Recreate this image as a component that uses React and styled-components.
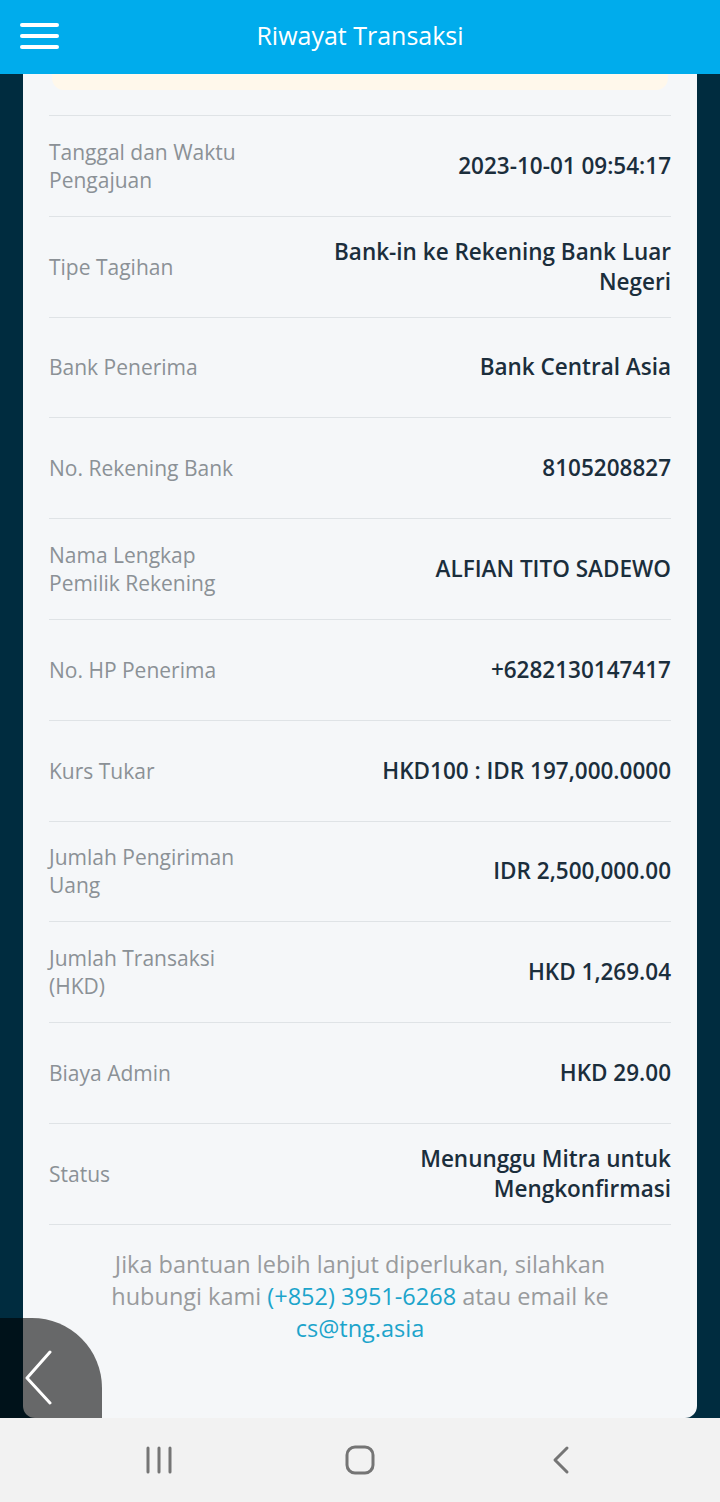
import React from "react";
import styled, { createGlobalStyle } from "styled-components";

const Global = createGlobalStyle`
  html, body { margin: 0; padding: 0; }
  body { font-family: "Open Sans", "Noto Sans", sans-serif; background: #002c3f; }
  * { box-sizing: border-box; }
`;

const Page = styled.div`
  position: relative;
  width: 720px;
  height: 1502px;
  display: flex;
  flex-direction: column;
  overflow: hidden;
  background: #002c3f;
`;

const Header = styled.header`
  flex: 0 0 74px;
  background: #00acec;
  display: flex;
  align-items: center;
  justify-content: center;
  padding-bottom: 5px;
  position: relative;
  z-index: 2;
`;

const Burger = styled.div`
  position: absolute;
  left: 20px;
  top: 23px;
  width: 39px;
  display: flex;
  flex-direction: column;
  gap: 7px;
  span {
    display: block;
    height: 4px;
    border-radius: 2px;
    background: #ffffff;
  }
`;

const Title = styled.h1`
  margin: 0;
  font-size: 25px;
  font-weight: 400;
  color: #ffffff;
`;

const Main = styled.main`
  flex: 1;
  padding: 0 23px;
  display: flex;
  flex-direction: column;
  overflow: hidden;
`;

const Card = styled.section`
  flex: 1;
  background: #f5f7f9;
  border-radius: 0 0 12px 12px;
  padding: 0 26px;
  display: flex;
  flex-direction: column;
`;

const Notice = styled.div`
  height: 16px;
  margin: 0 3px;
  background: #fff8eb;
  border-radius: 0 0 12px 12px;
`;

const List = styled.div`
  margin-top: 25px;
  border-top: 1px solid #dfe3e6;
`;

const Row = styled.div`
  height: 100.8px;
  display: flex;
  align-items: center;
  border-bottom: 1px solid #dfe3e6;
`;

const Label = styled.div`
  flex: 0 0 33%;
  font-size: 21px;
  line-height: 28px;
  color: #8b9196;
`;

const Value = styled.div`
  flex: 1;
  padding-left: 16px;
  text-align: right;
  font-size: 22.5px;
  line-height: 30px;
  font-weight: 600;
  color: #1b2e3c;
`;

const Help = styled.p`
  margin: 23px 0 0;
  text-align: center;
  font-size: 23.5px;
  line-height: 32px;
  color: #999b9d;
  padding: 0 40px;
`;

const Link = styled.a`
  color: #1ca4cb;
  text-decoration: none;
`;

const FloatBack = styled.div`
  position: absolute;
  left: 0;
  top: 1318px;
  width: 102px;
  height: 120px;
  background: rgba(0, 0, 0, 0.58);
  border-radius: 0 70px 0 0;
  z-index: 1;
  svg { position: absolute; left: 24px; top: 32px; }
`;

const SysNav = styled.nav`
  flex: 0 0 84px;
  background: #f2f2f2;
  display: flex;
  align-items: center;
  justify-content: center;
  gap: 161px;
  position: relative;
  z-index: 2;
`;

const NavIcon = styled.div`
  width: 40px;
  height: 40px;
  display: flex;
  align-items: center;
  justify-content: center;
`;

const rows = [
  ["Tanggal dan Waktu Pengajuan", "2023-10-01 09:54:17"],
  ["Tipe Tagihan", "Bank-in ke Rekening Bank Luar Negeri"],
  ["Bank Penerima", "Bank Central Asia"],
  ["No. Rekening Bank", "8105208827"],
  ["Nama Lengkap Pemilik Rekening", "ALFIAN TITO SADEWO"],
  ["No. HP Penerima", "+6282130147417"],
  ["Kurs Tukar", "HKD100 : IDR 197,000.0000"],
  ["Jumlah Pengiriman Uang", "IDR 2,500,000.00"],
  ["Jumlah Transaksi (HKD)", "HKD 1,269.04"],
  ["Biaya Admin", "HKD 29.00"],
  ["Status", "Menunggu Mitra untuk Mengkonfirmasi"],
];

export default function App() {
  return (
    <>
      <Global />
      <Page>
        <Header>
          <Burger>
            <span />
            <span />
            <span />
          </Burger>
          <Title>Riwayat Transaksi</Title>
        </Header>
        <Main>
          <Card>
            <Notice />
            <List>
              {rows.map(([l, v]) => (
                <Row key={l}>
                  <Label>{l}</Label>
                  <Value>{v}</Value>
                </Row>
              ))}
            </List>
            <Help>
              Jika bantuan lebih lanjut diperlukan, silahkan hubungi kami{" "}
              <Link>(+852) 3951-6268</Link> atau email ke{" "}
              <Link>cs@tng.asia</Link>
            </Help>
          </Card>
        </Main>
        <FloatBack>
          <svg width="30" height="56" viewBox="0 0 30 56" fill="none">
            <path d="M26 2 L3 28 L26 53" stroke="#ffffff" strokeWidth="3" strokeLinecap="round" strokeLinejoin="round" />
          </svg>
        </FloatBack>
        <SysNav>
          <NavIcon>
            <svg width="28" height="28" viewBox="0 0 28 28" fill="none">
              <path d="M3 2 V26 M14 2 V26 M25 2 V26" stroke="#757575" strokeWidth="3" strokeLinecap="round" />
            </svg>
          </NavIcon>
          <NavIcon>
            <svg width="30" height="30" viewBox="0 0 30 30" fill="none">
              <rect x="2" y="2" width="26" height="26" rx="8" stroke="#757575" strokeWidth="3" />
            </svg>
          </NavIcon>
          <NavIcon>
            <svg width="20" height="30" viewBox="0 0 20 30" fill="none">
              <path d="M16 3 L4 15 L16 27" stroke="#757575" strokeWidth="3" strokeLinecap="round" strokeLinejoin="round" />
            </svg>
          </NavIcon>
        </SysNav>
      </Page>
    </>
  );
}
